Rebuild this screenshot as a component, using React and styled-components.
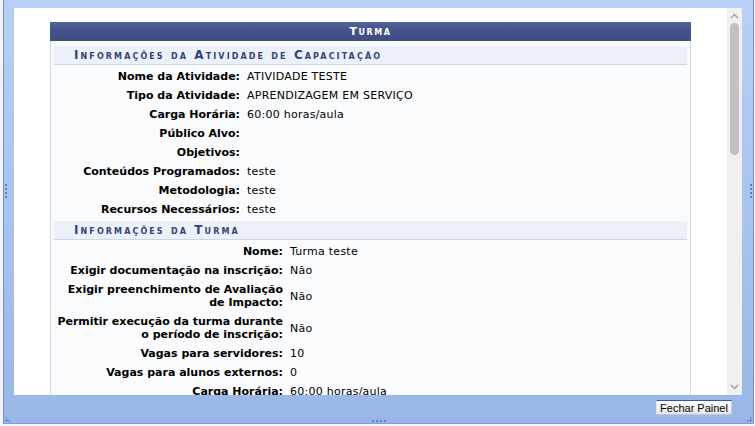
import React from 'react';
import styled, { createGlobalStyle } from 'styled-components';

const GlobalStyle = createGlobalStyle`
  html, body {
    margin: 0;
    padding: 0;
    background: #f3f5f9;
    font-family: 'DejaVu Sans', Verdana, sans-serif;
    font-size: 11px;
  }
`;

const atividade = [
  ['Nome da Atividade:', 'ATIVIDADE TESTE'],
  ['Tipo da Atividade:', 'APRENDIZAGEM EM SERVIÇO'],
  ['Carga Horária:', '60:00 horas/aula'],
  ['Público Alvo:', ''],
  ['Objetivos:', ''],
  ['Conteúdos Programados:', 'teste'],
  ['Metodologia:', 'teste'],
  ['Recursos Necessários:', 'teste'],
];

const turma = [
  ['Nome:', 'Turma teste'],
  ['Exigir documentação na inscrição:', 'Não'],
  ['Exigir preenchimento de Avaliação de Impacto:', 'Não'],
  ['Permitir execução da turma durante o período de inscrição:', 'Não'],
  ['Vagas para servidores:', '10'],
  ['Vagas para alunos externos:', '0'],
  ['Carga Horária:', '60:00 horas/aula'],
  ['Período:', '01/03/2021 a 30/03/2021'],
  ['Situação:', 'ABERTA'],
];

const App = () => {
  return (
    <>
      <GlobalStyle />
      <Page>
        <Frame>
          <Content>
            <ScrollArea>
              <Panel>
                <Caption>Turma</Caption>
                <PanelBody>
                  <Section>
                    <SubHeader>Informações da Atividade de Capacitação</SubHeader>
                    {atividade.map(([label, value]) => (
                      <Row key={label} labelWidth={186}>
                        <Label>{label}</Label>
                        <Value>{value}</Value>
                      </Row>
                    ))}
                  </Section>
                  <Section>
                    <SubHeader>Informações da Turma</SubHeader>
                    {turma.map(([label, value]) => (
                      <Row key={label} labelWidth={229}>
                        <Label>{label}</Label>
                        <Value>{value}</Value>
                      </Row>
                    ))}
                  </Section>
                </PanelBody>
              </Panel>
            </ScrollArea>
            <ScrollBar>
              <Arrow viewBox="0 0 9 6">
                <polyline points="1,5 4.5,1.5 8,5" />
              </Arrow>
              <Track>
                <Thumb />
              </Track>
              <Arrow viewBox="0 0 9 6">
                <polyline points="1,1 4.5,4.5 8,1" />
              </Arrow>
            </ScrollBar>
          </Content>
          <Footer>
            <CloseButton type="button">Fechar Painel</CloseButton>
          </Footer>
          <Grip side="left" />
          <Grip side="right" />
          <BottomGrip />
          <CornerGrip side="left" />
          <CornerGrip side="right" />
        </Frame>
      </Page>
    </>
  );
};

export default App;

const Page = styled.div`
  width: 755px;
  height: 426px;
  padding-left: 3px;
  box-sizing: border-box;
  overflow: hidden;
`;

const Frame = styled.div`
  position: relative;
  width: 751px;
  height: 424px;
  box-sizing: border-box;
  padding: 8px 11px 0 10px;
  border-left: 1px solid #6d90cf;
  border-right: 1px solid #6d90cf;
  border-bottom: 1px solid #7d9ed8;
  background: linear-gradient(to bottom, #b6d0f5 0%, #a8c4ef 50%, #99b6e6 100%);
  display: flex;
  flex-direction: column;
`;

const Content = styled.div`
  height: 387px;
  display: flex;
  background: #fff;
`;

const ScrollArea = styled.div`
  flex: 1;
  overflow: hidden;
  padding-top: 14px;
`;

const Panel = styled.div`
  width: 641px;
  margin: 0 auto;
  box-sizing: border-box;
  border-left: 1px solid #d4dae6;
  border-right: 1px solid #d4dae6;
  background: #f9fbfd;
`;

const Caption = styled.div`
  height: 19px;
  line-height: 19px;
  margin: 0 -1px;
  background: linear-gradient(to bottom, #55649a 0%, #46548a 40%, #3f4c80 100%);
  color: #fff;
  font-weight: bold;
  font-variant: small-caps;
  font-size: 11px;
  letter-spacing: 1.5px;
  text-align: center;
`;

const PanelBody = styled.div`
  padding: 5px 3px 0 3px;
  display: flex;
  flex-direction: column;
  gap: 4px;
`;

const Section = styled.div`
  display: flex;
  flex-direction: column;
`;

const SubHeader = styled.div`
  height: 18px;
  line-height: 19px;
  padding-left: 20px;
  background: #ecf1f9;
  border-bottom: 1px solid #c9d5eb;
  color: #34427a;
  font-weight: bold;
  font-variant: small-caps;
  font-size: 12px;
  letter-spacing: 2.1px;
`;

const Row = styled.div`
  display: grid;
  grid-template-columns: ${(p) => p.labelWidth}px 1fr;
  column-gap: 7px;
  align-items: center;
  padding: 5px 0 1px;
  line-height: 13px;
  color: #000;
`;

const Label = styled.div`
  font-weight: bold;
  text-align: right;
`;

const Value = styled.div`
  letter-spacing: 0.25px;
`;

const ScrollBar = styled.div`
  width: 15px;
  background: #f0f0f0;
  display: flex;
  flex-direction: column;
  align-items: center;
`;

const Arrow = styled.svg`
  width: 9px;
  height: 6px;
  margin: 5px 0;
  flex-shrink: 0;
  fill: none;
  stroke: #a3a3a3;
  stroke-width: 1.5;
`;

const Track = styled.div`
  flex: 1;
  width: 100%;
  display: flex;
  justify-content: center;
`;

const Thumb = styled.div`
  width: 9px;
  height: 132px;
  margin-top: -1px;
  border-radius: 5px;
  background: #c1c1c1;
`;

const Footer = styled.div`
  flex: 1;
  display: flex;
  justify-content: flex-end;
  align-items: flex-start;
  padding: 5px 10px 0 0;
`;

const CloseButton = styled.button`
  width: 76px;
  height: 15px;
  padding: 0;
  box-sizing: border-box;
  border: 1px solid;
  border-color: #3b5596 #b9c8e4 #b9c8e4 #d7e1f2;
  background: linear-gradient(to bottom, #ffffff 0%, #f3f3f3 60%, #e4e4e4 100%);
  color: #000;
  font-family: 'Liberation Sans', Arial, sans-serif;
  font-size: 11px;
  line-height: 12px;
`;

// dotted resize handles drawn on the frame edges
const Grip = styled.div`
  position: absolute;
  top: 183px;
  ${(p) => (p.side === 'left' ? 'left: 1px;' : 'right: 1px;')}
  width: 2px;
  height: 15px;
  background: radial-gradient(circle, #5a7fc4 45%, transparent 55%) 0 0 / 2px 4px repeat-y;
`;

const BottomGrip = styled.div`
  position: absolute;
  bottom: 1px;
  left: 367px;
  width: 15px;
  height: 2px;
  background: radial-gradient(circle, #5a7fc4 45%, transparent 55%) 0 0 / 4px 2px repeat-x;
`;

const CornerGrip = styled.div`
  position: absolute;
  bottom: 1px;
  ${(p) => (p.side === 'left' ? 'left: 1px;' : 'right: 1px;')}
  width: 6px;
  height: 6px;
  background: radial-gradient(circle, #5a7fc4 45%, transparent 55%) 0 0 / 3px 3px;
  clip-path: ${(p) =>
    p.side === 'left' ? 'polygon(0 0, 100% 100%, 0 100%)' : 'polygon(100% 0, 100% 100%, 0 100%)'};
`;
